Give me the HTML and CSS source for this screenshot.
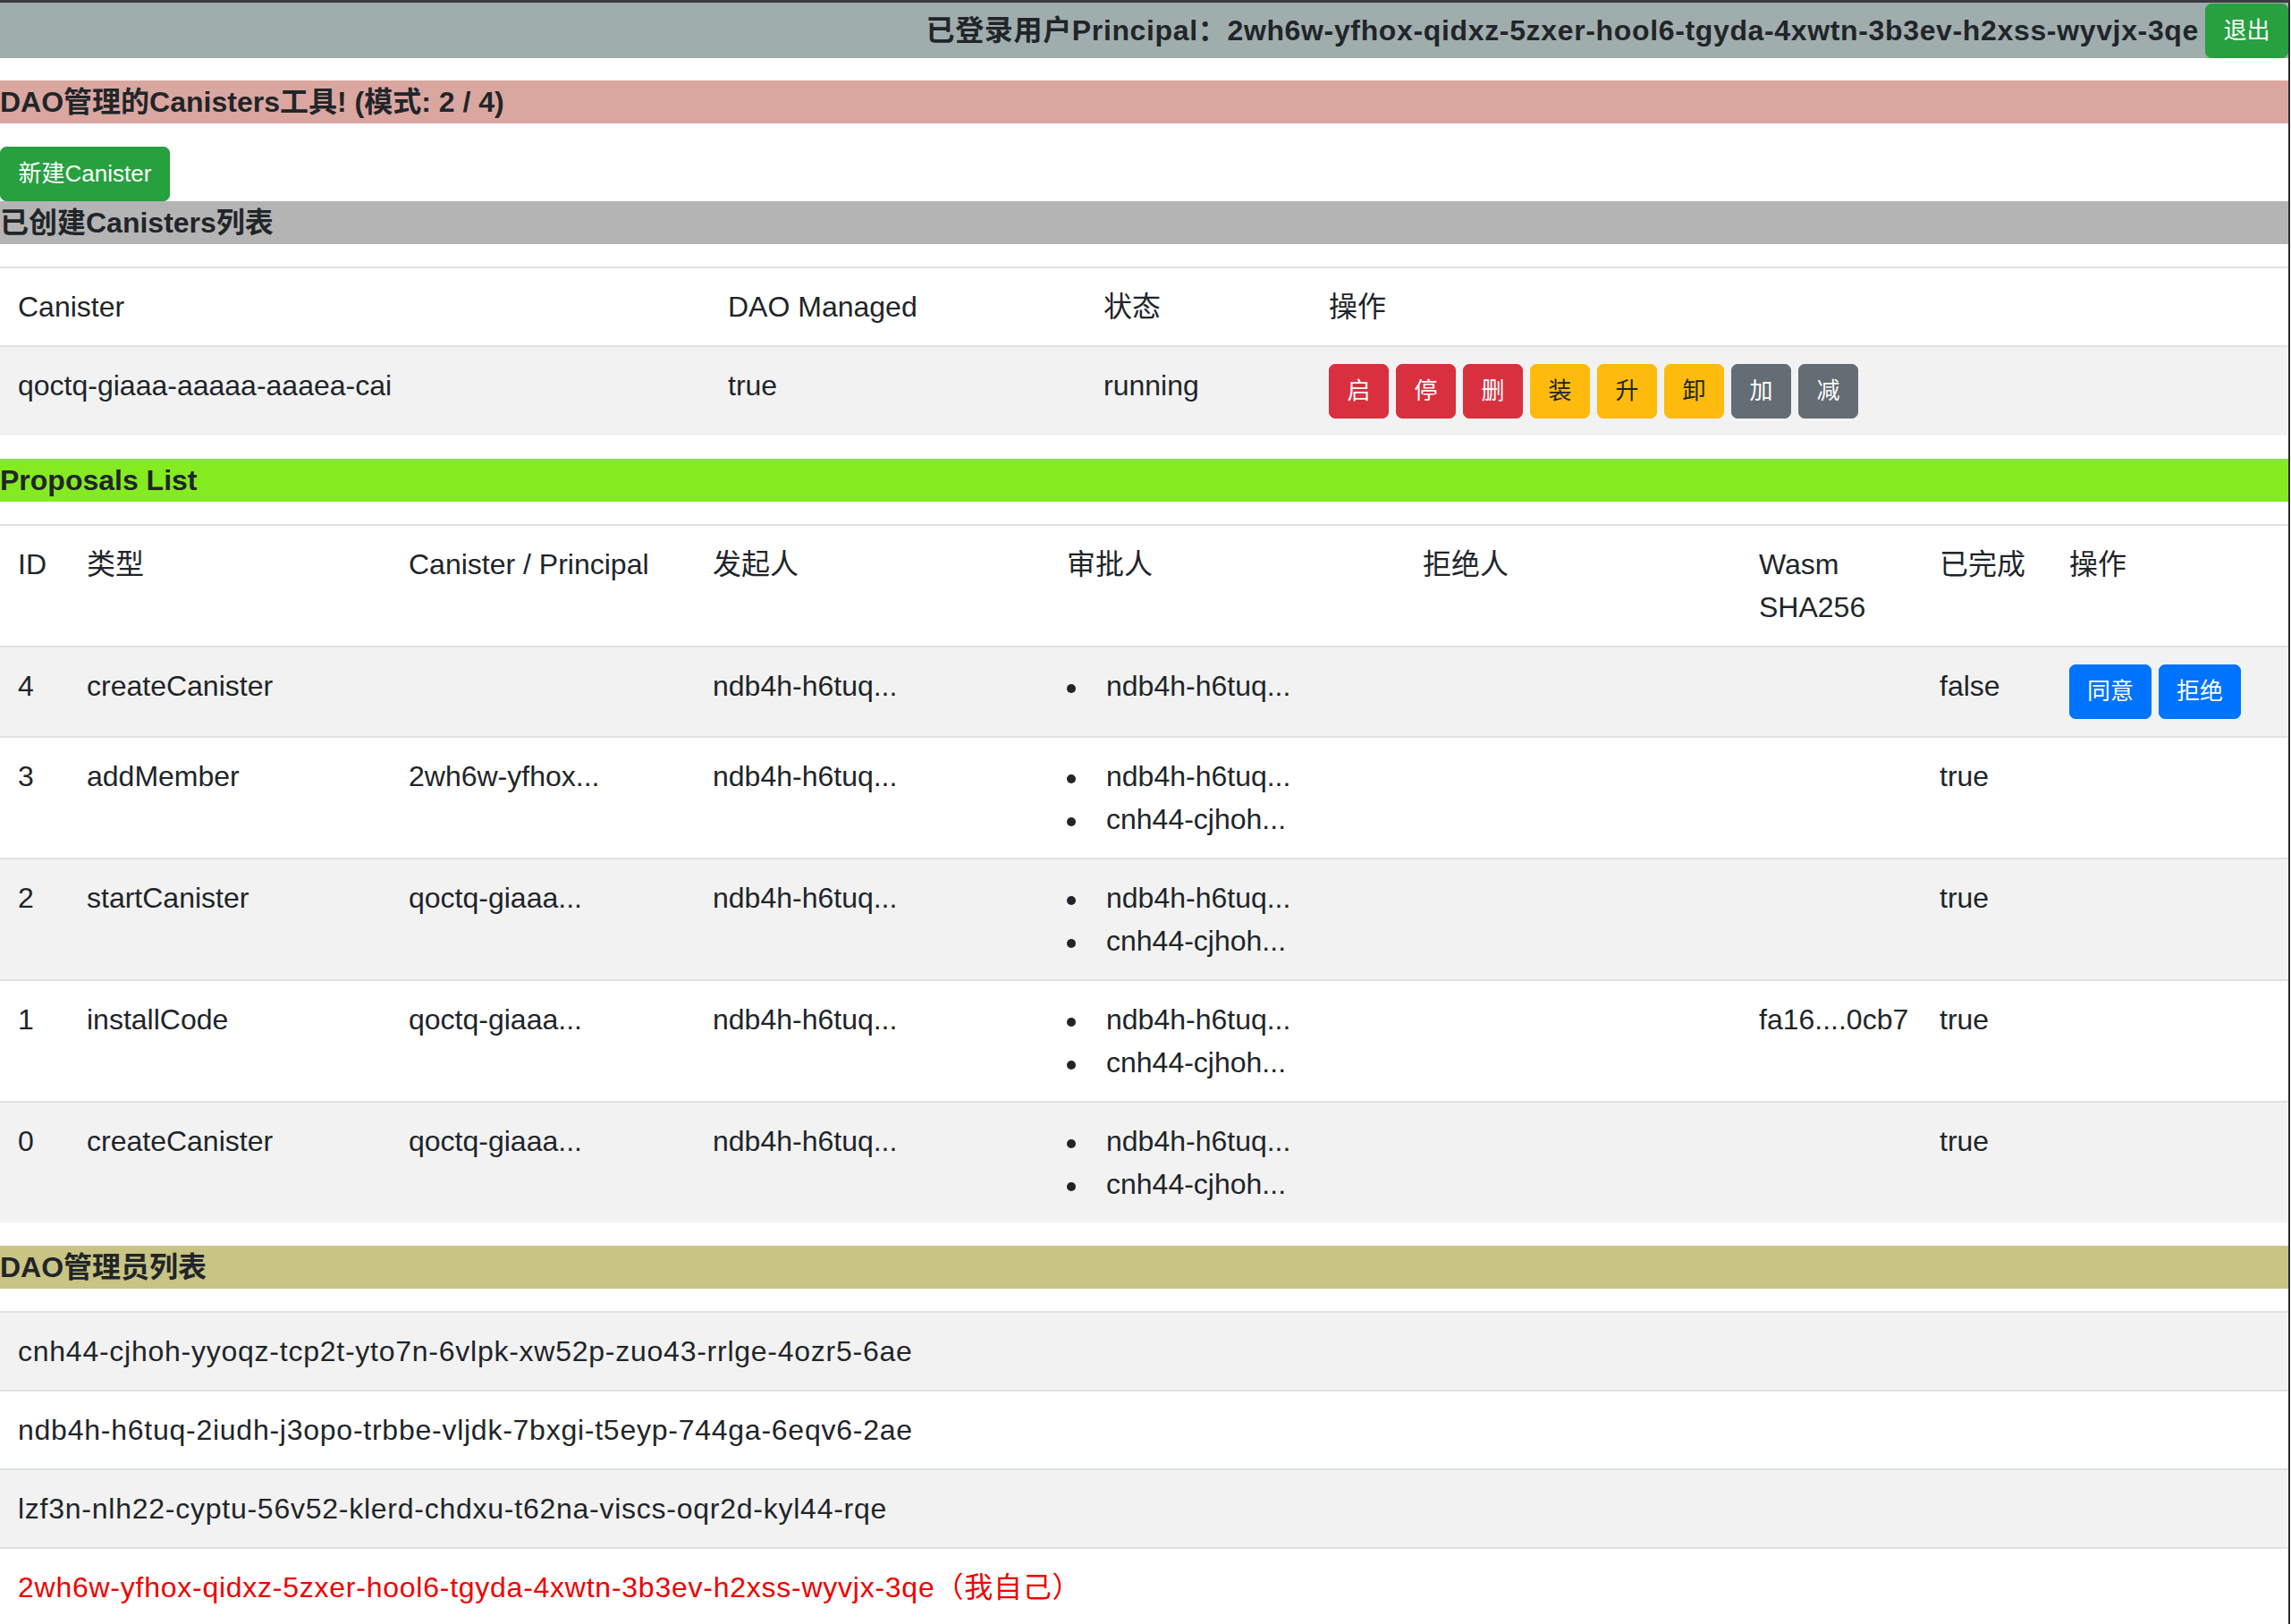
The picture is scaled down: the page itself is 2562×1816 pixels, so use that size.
FILE: index.html
```html
<!DOCTYPE html>
<html lang="zh-CN">
<head>
<meta charset="utf-8">
<title>DAO Canisters</title>
<link rel="stylesheet" href="styles.css">
</head>
<body>
<div class="page">
  <header class="topbar">
    <span class="login-text">已登录用户Principal：2wh6w-yfhox-qidxz-5zxer-hool6-tgyda-4xwtn-3b3ev-h2xss-wyvjx-3qe</span>
    <button class="btn btn-success btn-logout">退出</button>
  </header>

  <h5 class="band band-red">DAO管理的Canisters工具! (模式: 2 / 4)</h5>
  <div class="toolbar"><button class="btn btn-success">新建Canister</button></div>

  <h5 class="band band-gray">已创建Canisters列表</h5>
  <table class="table canisters">
    <colgroup>
      <col class="c-cid"><col class="c-dao"><col class="c-status"><col>
    </colgroup>
    <thead>
      <tr><th>Canister</th><th>DAO Managed</th><th>状态</th><th>操作</th></tr>
    </thead>
    <tbody>
      <tr>
        <td>qoctq-giaaa-aaaaa-aaaea-cai</td>
        <td>true</td>
        <td>running</td>
        <td>
          <div class="actions">
            <button class="btn btn-danger">启</button>
            <button class="btn btn-danger">停</button>
            <button class="btn btn-danger">删</button>
            <button class="btn btn-warning">装</button>
            <button class="btn btn-warning">升</button>
            <button class="btn btn-warning">卸</button>
            <button class="btn btn-secondary">加</button>
            <button class="btn btn-secondary">减</button>
          </div>
        </td>
      </tr>
    </tbody>
  </table>

  <h5 class="band band-green">Proposals List</h5>
  <table class="table proposals">
    <colgroup>
      <col class="p-id"><col class="p-type"><col class="p-cp"><col class="p-from"><col class="p-appr"><col class="p-rej"><col class="p-wasm"><col class="p-done"><col>
    </colgroup>
    <thead>
      <tr><th>ID</th><th>类型</th><th>Canister / Principal</th><th>发起人</th><th>审批人</th><th>拒绝人</th><th>Wasm SHA256</th><th>已完成</th><th>操作</th></tr>
    </thead>
    <tbody>
      <tr>
        <td>4</td><td>createCanister</td><td></td><td>ndb4h-h6tuq...</td>
        <td><ul class="plist"><li>ndb4h-h6tuq...</li></ul></td>
        <td></td><td></td><td>false</td>
        <td><div class="actions"><button class="btn btn-primary">同意</button><button class="btn btn-primary">拒绝</button></div></td>
      </tr>
      <tr>
        <td>3</td><td>addMember</td><td>2wh6w-yfhox...</td><td>ndb4h-h6tuq...</td>
        <td><ul class="plist"><li>ndb4h-h6tuq...</li><li>cnh44-cjhoh...</li></ul></td>
        <td></td><td></td><td>true</td><td></td>
      </tr>
      <tr>
        <td>2</td><td>startCanister</td><td>qoctq-giaaa...</td><td>ndb4h-h6tuq...</td>
        <td><ul class="plist"><li>ndb4h-h6tuq...</li><li>cnh44-cjhoh...</li></ul></td>
        <td></td><td></td><td>true</td><td></td>
      </tr>
      <tr>
        <td>1</td><td>installCode</td><td>qoctq-giaaa...</td><td>ndb4h-h6tuq...</td>
        <td><ul class="plist"><li>ndb4h-h6tuq...</li><li>cnh44-cjhoh...</li></ul></td>
        <td></td><td>fa16....0cb7</td><td>true</td><td></td>
      </tr>
      <tr>
        <td>0</td><td>createCanister</td><td>qoctq-giaaa...</td><td>ndb4h-h6tuq...</td>
        <td><ul class="plist"><li>ndb4h-h6tuq...</li><li>cnh44-cjhoh...</li></ul></td>
        <td></td><td></td><td>true</td><td></td>
      </tr>
    </tbody>
  </table>

  <h5 class="band band-olive">DAO管理员列表</h5>
  <table class="table members">
    <tbody>
      <tr><td>cnh44-cjhoh-yyoqz-tcp2t-yto7n-6vlpk-xw52p-zuo43-rrlge-4ozr5-6ae</td></tr>
      <tr><td>ndb4h-h6tuq-2iudh-j3opo-trbbe-vljdk-7bxgi-t5eyp-744ga-6eqv6-2ae</td></tr>
      <tr><td>lzf3n-nlh22-cyptu-56v52-klerd-chdxu-t62na-viscs-oqr2d-kyl44-rqe</td></tr>
      <tr><td class="self">2wh6w-yfhox-qidxz-5zxer-hool6-tgyda-4xwtn-3b3ev-h2xss-wyvjx-3qe（我自己）</td></tr>
    </tbody>
  </table>
</div>
</body>
</html>
```

FILE: styles.css
```css
html, body {
  margin: 0;
  padding: 0;
  background: #ffffff;
}

body {
  font-family: "Liberation Sans", "Noto Sans CJK SC", sans-serif;
  font-size: 32px;
  line-height: 48px;
  color: #212529;
}

.page {
  width: 2559px;
  min-height: 1813px;
  border-top: 3px solid #3b3c40;
  border-right: 2px solid #2b2b2e;
}

.topbar {
  display: flex;
  justify-content: flex-end;
  align-items: center;
  gap: 7px;
  height: 62px;
  background: #a0adad;
  margin-bottom: 25px;
}

.login-text {
  font-weight: 700;
  font-size: 32px;
  letter-spacing: 0.65px;
}

.btn-logout {
  align-self: flex-end;
}

.band {
  margin: 0 0 25px 0;
  font-size: 32px;
  line-height: 48px;
  font-weight: 700;
}

.band-red { background: #daa6a0; margin-bottom: 26px; }
.band-gray { background: #b4b4b4; }
.band-green { background: #84eb21; }
.band-olive { background: #c8c483; }

.toolbar {
  display: flex;
}

.btn {
  font-family: "Liberation Sans", "Noto Sans CJK SC", sans-serif;
  font-size: 26px;
  line-height: 39px;
  padding: 10px 19.5px;
  border: 1px solid transparent;
  border-radius: 7px;
  color: #ffffff;
  cursor: pointer;
  white-space: nowrap;
}

.btn-success { background: #27a03f; border-color: #27a03f; }
.btn-danger { background: #d9303f; border-color: #d9303f; }
.btn-warning { background: #febb0e; border-color: #febb0e; color: #212529; }
.btn-secondary { background: #646c74; border-color: #646c74; }
.btn-primary { background: #0073ff; border-color: #0073ff; padding: 10px 19px; }

.table {
  width: 100%;
  border-collapse: collapse;
  table-layout: fixed;
  margin-bottom: 26px;
}

.table th,
.table td {
  padding: 19px 20px;
  border-top: 2px solid #dee2e6;
  text-align: left;
  vertical-align: top;
  font-weight: 400;
  white-space: normal;
}

.table td {
  white-space: nowrap;
}

.table tbody tr:nth-child(odd) {
  background: #f2f2f2;
}

.c-cid { width: 794px; }
.c-dao { width: 420px; }
.c-status { width: 252px; }

.p-id { width: 77px; }
.p-type { width: 360px; }
.p-cp { width: 340px; }
.p-from { width: 396px; }
.p-appr { width: 398px; }
.p-rej { width: 376px; }
.p-wasm { width: 202px; }
.p-done { width: 145px; }

.actions {
  display: flex;
  gap: 8px;
}

.plist {
  list-style: none;
  margin: 0;
  padding: 0;
}

.plist li {
  display: flex;
}

.plist li::before {
  content: "";
  flex: none;
  width: 10px;
  height: 10px;
  margin-top: 22px;
  margin-right: 34px;
  border-radius: 50%;
  background: #212529;
}

.members {
  margin-bottom: 0;
}

.members td {
  letter-spacing: 0.75px;
}

.self {
  color: #f00000;
}
```
